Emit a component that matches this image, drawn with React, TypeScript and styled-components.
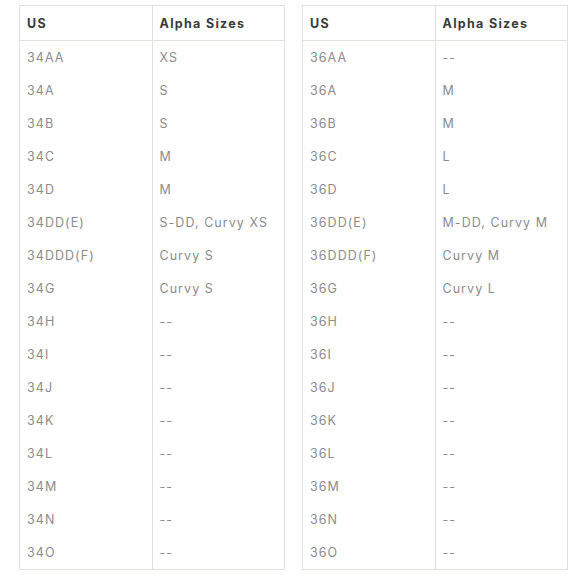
import React, { FC } from 'react'
import styled, { createGlobalStyle } from 'styled-components'

const GlobalStyle = createGlobalStyle`
  body {
    margin: 0;
    background: #fff;
    font-family: Inter, "Liberation Sans", Arial, sans-serif;
  }
`

interface SizeRow {
  us: string
  alpha: string
}

const band34: SizeRow[] = [
  { us: '34AA', alpha: 'XS' },
  { us: '34A', alpha: 'S' },
  { us: '34B', alpha: 'S' },
  { us: '34C', alpha: 'M' },
  { us: '34D', alpha: 'M' },
  { us: '34DD(E)', alpha: 'S-DD, Curvy XS' },
  { us: '34DDD(F)', alpha: 'Curvy S' },
  { us: '34G', alpha: 'Curvy S' },
  { us: '34H', alpha: '--' },
  { us: '34I', alpha: '--' },
  { us: '34J', alpha: '--' },
  { us: '34K', alpha: '--' },
  { us: '34L', alpha: '--' },
  { us: '34M', alpha: '--' },
  { us: '34N', alpha: '--' },
  { us: '34O', alpha: '--' },
]

const band36: SizeRow[] = [
  { us: '36AA', alpha: '--' },
  { us: '36A', alpha: 'M' },
  { us: '36B', alpha: 'M' },
  { us: '36C', alpha: 'L' },
  { us: '36D', alpha: 'L' },
  { us: '36DD(E)', alpha: 'M-DD, Curvy M' },
  { us: '36DDD(F)', alpha: 'Curvy M' },
  { us: '36G', alpha: 'Curvy L' },
  { us: '36H', alpha: '--' },
  { us: '36I', alpha: '--' },
  { us: '36J', alpha: '--' },
  { us: '36K', alpha: '--' },
  { us: '36L', alpha: '--' },
  { us: '36M', alpha: '--' },
  { us: '36N', alpha: '--' },
  { us: '36O', alpha: '--' },
]

const SizeTable: FC<{ rows: SizeRow[] }> = ({ rows }) => (
  <Table>
    <thead>
      <tr>
        <Head>US</Head>
        <Head>Alpha Sizes</Head>
      </tr>
    </thead>
    <tbody>
      {rows.map(r => (
        <tr key={r.us}>
          <Cell>{r.us}</Cell>
          <Cell>{r.alpha}</Cell>
        </tr>
      ))}
    </tbody>
  </Table>
)

const App: FC = () => (
  <>
    <GlobalStyle />
    <Page>
      <SizeTable rows={band34} />
      <SizeTable rows={band36} />
    </Page>
  </>
)

const Page = styled.div`
  display: flex;
  gap: 17px;
  padding: 5px 0 0 19px;
`

const Table = styled.table`
  width: 266px;
  border-collapse: collapse;
  table-layout: fixed;
  border: 1px solid #e3e1dd;
`

const Head = styled.th`
  height: 34px;
  padding: 0 7px;
  text-align: left;
  font-size: 12.5px;
  font-weight: 700;
  color: #3a3a3a;
  letter-spacing: 1.3px;
  border: 1px solid #e3e1dd;
`

const Cell = styled.td`
  height: 33px;
  padding: 0 7px;
  font-size: 12.5px;
  color: #8c8c8c;
  letter-spacing: 1.05px;
  border-left: 1px solid #e3e1dd;
  border-right: 1px solid #e3e1dd;
  white-space: nowrap;
`

export default App
